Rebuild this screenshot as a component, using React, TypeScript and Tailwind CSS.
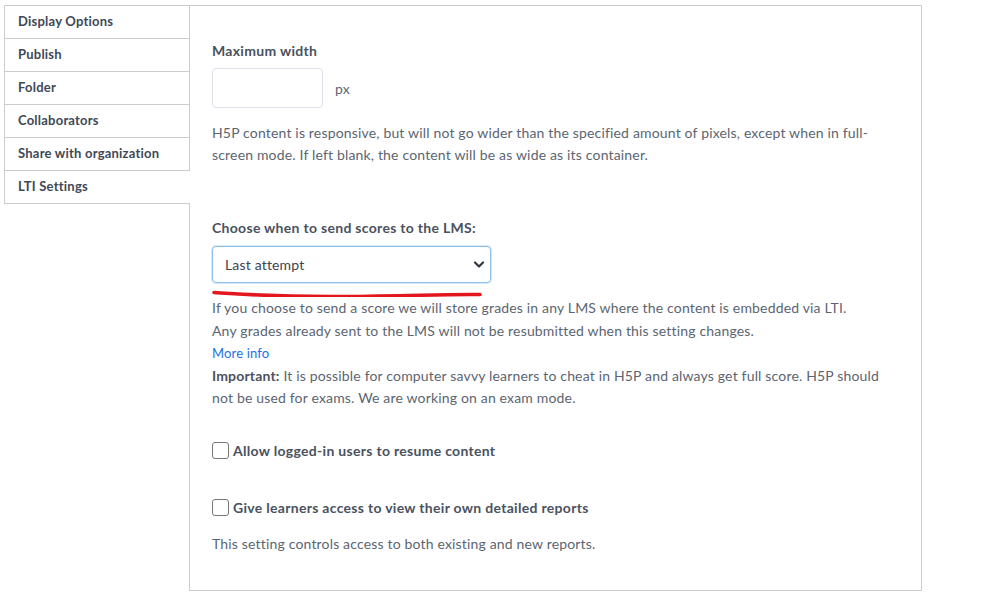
import { useState } from 'react';

const tabs = ['Display Options', 'Publish', 'Folder', 'Collaborators', 'Share with organization', 'LTI Settings'];

const App = () => {
  const [active] = useState('LTI Settings');
  const [maxWidth, setMaxWidth] = useState('');
  const [scoreMode, setScoreMode] = useState('last');

  return (
    <div className="bg-white w-[991px] h-[598px] pt-[5px] pl-[4px] font-['Lato',sans-serif]">
      <div className="flex h-[586px]">
        {/* Onglets */}
        <div className="flex flex-col w-[186px] border-t border-[#cccccc]">
          {tabs.map((t) => (
            <div
              key={t}
              className={
                t === active
                  ? 'h-[33px] flex items-center pl-[13px] border-l border-b border-[#cccccc] bg-white text-[13px] font-bold tracking-[0.22px] text-[#3f4856]'
                  : 'h-[33px] flex items-center pl-[13px] border-l border-b border-r border-[#cccccc] bg-white text-[13px] font-bold tracking-[0.22px] text-[#3f4856]'
              }
            >
              {t}
            </div>
          ))}
          <div className="flex-1 border-r border-[#cccccc]" />
        </div>

        {/* Contenu */}
        <div className="w-[732px] border-t border-r border-b border-[#cccccc] pt-[35px] pl-[22px] pr-[21px] text-[14px] tracking-[0.17px] text-[#5c6571]">
          <div className="text-[14px] leading-[20px] font-bold tracking-[0.3px] text-[#4a525e]">Maximum width</div>
          <div className="flex items-center mt-[7px]">
            <input
              value={maxWidth}
              onChange={(e) => setMaxWidth(e.target.value)}
              className="w-[111px] h-[40px] border border-[#dde1ea] rounded-[4px] px-2 outline-none"
            />
            <span className="ml-[12px] text-[#5c6571]">px</span>
          </div>
          <p className="mt-[14px] leading-[22px]">
            H5P content is responsive, but will not go wider than the specified amount of pixels, except when in full-screen mode. If left
            blank, the content will be as wide as its container.
          </p>

          <div className="mt-[52px] leading-[20px] font-bold tracking-[0.3px] text-[#4a525e]">Choose when to send scores to the LMS:</div>
          <div className="relative mt-[8px] w-[279px]">
            <select
              value={scoreMode}
              onChange={(e) => setScoreMode(e.target.value)}
              className="appearance-none w-[279px] h-[37px] pl-[12px] border border-[#8cc0ea] rounded-[4px] shadow-[0_0_0_1px_rgba(140,192,234,0.35)] bg-white text-[14px] tracking-[0.17px] text-[#3d4450] outline-none"
            >
              <option value="last">Last attempt</option>
              <option value="first">First attempt</option>
              <option value="best">Best attempt</option>
            </select>
            <svg className="absolute right-[6px] top-[14px] pointer-events-none" width="12" height="9" viewBox="0 0 12 9">
              <path d="M2 2.5 L6 6.5 L10 2.5" fill="none" stroke="#2f3742" strokeWidth="2.2" strokeLinecap="round" strokeLinejoin="round" />
            </svg>
          </div>
          {/* trait rouge */}
          <svg width="280" height="14" viewBox="0 0 280 14" className="block">
            <path d="M2 9.5 C 30 11, 60 14, 130 13.5 S 230 11, 268 11.5" fill="none" stroke="#e2161c" strokeWidth="3.6" strokeLinecap="round" />
          </svg>

          <div className="leading-[22.5px]">
            <div>If you choose to send a score we will store grades in any LMS where the content is embedded via LTI.</div>
            <div>Any grades already sent to the LMS will not be resubmitted when this setting changes.</div>
            <div>
              <a href="#" className="text-[13px] text-[#1a6fe8]">
                More info
              </a>
            </div>
            <p>
              <b className="font-bold text-[#4a525e]">Important:</b> It is possible for computer savvy learners to cheat in H5P and
              always get full score. H5P should not be used for exams. We are working on an exam mode.
            </p>
          </div>

          <label className="flex items-center gap-[4px] mt-[31px] h-[20px]">
            <input type="checkbox" className="appearance-none w-[17px] h-[17px] border border-[#767676] rounded-[3px] bg-white m-0" />
            <span className="font-bold tracking-[0.3px] text-[#4a525e]">Allow logged-in users to resume content</span>
          </label>

          <label className="flex items-center gap-[4px] mt-[37px] h-[20px]">
            <input type="checkbox" className="appearance-none w-[17px] h-[17px] border border-[#767676] rounded-[3px] bg-white m-0" />
            <span className="font-bold tracking-[0.3px] text-[#4a525e]">Give learners access to view their own detailed reports</span>
          </label>
          <p className="mt-[15px] leading-[22px]">This setting controls access to both existing and new reports.</p>
        </div>
      </div>
    </div>
  );
};

export default App;
